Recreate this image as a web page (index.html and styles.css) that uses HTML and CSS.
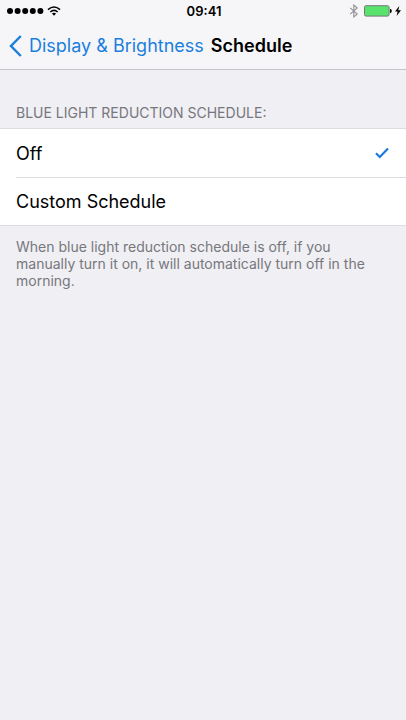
FILE: index.html
```html
<!DOCTYPE html>
<html lang="en">
<head>
<meta charset="utf-8">
<meta name="viewport" content="width=device-width, initial-scale=1">
<title>Schedule</title>
<link rel="stylesheet" href="styles.css">
</head>
<body>
<header class="top">
  <div class="status">
    <div class="status-side">
      <svg class="signal" viewBox="0 0 37 8" aria-hidden="true"><circle cx="3" cy="4" r="3"/><circle cx="10.6" cy="4" r="3"/><circle cx="18.2" cy="4" r="3"/><circle cx="25.8" cy="4" r="3"/><circle cx="33.4" cy="4" r="3"/></svg>
      <svg class="wifi" viewBox="0 0 14 10" aria-hidden="true"><path d="M1 3.6Q7-1.6 13 3.6M3.3 6Q7 2.8 10.7 6" fill="none" stroke="#000" stroke-width="1.6"/><path d="M7 9.8L4.9 7.6Q7 5.9 9.1 7.6Z"/></svg>
    </div>
    <time class="clock">09:41</time>
    <div class="status-side status-end">
      <svg class="bluetooth" viewBox="0 0 10 14" aria-hidden="true"><path d="M1.2 3.8L8.2 10L4.8 13V1L8.2 4L1.2 10.2" fill="none" stroke="#929296" stroke-width="1.1"/></svg>
      <svg class="battery" viewBox="0 0 28 12" aria-hidden="true"><rect x=".5" y=".7" width="24.6" height="10.4" rx="1.6" fill="#58e36d" stroke="#77777b"/><path d="M26 3.8Q27.8 4.2 27.8 6T26 8.2Z"/></svg>
      <svg class="bolt" viewBox="0 0 6 10" aria-hidden="true"><path d="M4.3 0L0 5.6H2.6L1.6 10L6 4.2H3.3Z"/></svg>
    </div>
  </div>
  <nav class="nav">
    <a class="back" href="#"><svg class="chevron" viewBox="0 0 13 22" aria-hidden="true"><path d="M11.8 1L2 11L11.8 21" fill="none" stroke="currentColor" stroke-width="2.5"/></svg>Display &amp; Brightness</a>
    <h1 class="title">Schedule</h1>
  </nav>
</header>
<main>
  <fieldset class="group">
    <legend class="heading">BLUE LIGHT REDUCTION SCHEDULE:</legend>
    <div class="options">
      <label class="option"><input class="radio" type="radio" name="schedule" checked><span class="option-body">Off<svg class="check" viewBox="0 0 14 12" aria-hidden="true"><path d="M1 6.2L4.8 10L13 1.4" fill="none" stroke="currentColor" stroke-width="2.2"/></svg></span></label>
      <label class="option"><input class="radio" type="radio" name="schedule"><span class="option-body">Custom Schedule<svg class="check" viewBox="0 0 14 12" aria-hidden="true"><path d="M1 6.2L4.8 10L13 1.4" fill="none" stroke="currentColor" stroke-width="2.2"/></svg></span></label>
    </div>
  </fieldset>
  <p class="note">When blue light reduction schedule is off, if you manually turn it on, it will automatically turn off in the morning.</p>
</main>
</body>
</html>
```
FILE: styles.css
```css
* {
  box-sizing: border-box;
}

body {
  margin: 0;
  min-height: 100vh;
  background: #efeff4;
  color: #000;
  font-family: Inter, "Liberation Sans", sans-serif;
}

svg {
  display: block;
  flex: none;
}

.top {
  background: #f6f6f9;
  border-bottom: 1px solid #c5c5c9;
}

.status {
  display: flex;
  align-items: center;
  height: 22px;
  padding: 0 5px 0 7px;
}

.status-side {
  display: flex;
  flex: 1;
  align-items: center;
  gap: 3px;
}

.status-end {
  justify-content: flex-end;
}

.signal {
  width: 37px;
  height: 8px;
}

.wifi {
  width: 14px;
  height: 10px;
}

.clock {
  font-size: 13px;
  font-weight: 600;
}

.bluetooth {
  width: 10px;
  height: 14px;
  margin-right: 2px;
}

.battery {
  width: 28px;
  height: 12px;
}

.bolt {
  width: 6px;
  height: 10px;
}

.nav {
  display: flex;
  align-items: center;
  gap: 7px;
  height: 47px;
  padding: 0 9px;
  font-size: 18px;
  white-space: nowrap;
}

.back {
  display: flex;
  align-items: center;
  gap: 7px;
  color: #1b7fdc;
  text-decoration: none;
}

.chevron {
  width: 13px;
  height: 22px;
}

.title {
  margin: 0;
  font-size: 18px;
  font-weight: 600;
}

.group {
  min-width: 0;
  margin: 0;
  padding: 0;
  border: 0;
}

.heading {
  padding: 34px 16px 6px;
  color: #77777c;
  font-size: 14px;
  line-height: 18px;
}

.options {
  background: #fff;
  border-top: 1px solid #dcdce1;
  border-bottom: 1px solid #dcdce1;
}

.option {
  display: block;
  position: relative;
  padding-left: 16px;
}

.radio {
  position: absolute;
  opacity: 0;
}

.option-body {
  display: flex;
  align-items: center;
  justify-content: space-between;
  height: 48px;
  padding-right: 17px;
  font-size: 18px;
}

.option + .option .option-body {
  border-top: 1px solid #dcdce1;
}

.check {
  width: 14px;
  height: 12px;
  color: #1b7bdc;
  visibility: hidden;
}

.radio:checked + .option-body .check {
  visibility: visible;
}

.note {
  margin: 0;
  padding: 12px 16px;
  color: #77777c;
  font-size: 14px;
  line-height: 17px;
}
```
